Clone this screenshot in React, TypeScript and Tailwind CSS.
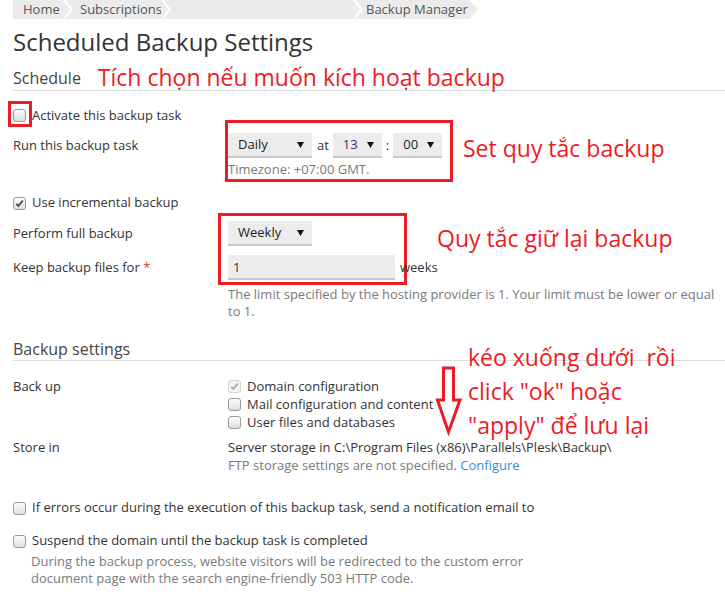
import React from 'react';

const RED = 'text-[#ed1c24]';

function Chevron() {
  return (
    <svg width="10" height="19" viewBox="0 0 10 19" className="shrink-0">
      <polyline points="1,0 9,9.5 1,19" fill="none" stroke="#ffffff" strokeWidth="2" />
    </svg>
  );
}

function Breadcrumb() {
  return (
    <div className="ml-[13px] flex h-[19px] items-center text-[13px] leading-[19px] text-[#555]">
      <div className="flex h-full w-[50px] items-center bg-[#ebebeb] pl-[10px]">Home</div>
      <div className="h-full bg-[#ebebeb]">
        <Chevron />
      </div>
      <div className="flex h-full w-[88px] items-center bg-[#ebebeb] pl-[7px]">Subscriptions</div>
      <div className="h-full bg-[#ebebeb]">
        <Chevron />
      </div>
      <div className="h-full w-[182px] bg-[#ebebeb]" />
      <div className="h-full bg-[#ebebeb]">
        <Chevron />
      </div>
      <div className="flex h-full w-[106px] items-center bg-[#ebebeb] pl-[3px]">Backup Manager</div>
      <svg width="9" height="19" viewBox="0 0 9 19" className="shrink-0">
        <polygon points="0,0 9,9.5 0,19" fill="#ebebeb" />
      </svg>
    </div>
  );
}

function Checkbox({ checked = false, disabled = false }: { checked?: boolean; disabled?: boolean }) {
  return (
    <span
      className={`relative inline-flex h-[13px] w-[13px] shrink-0 items-center justify-center rounded-[3px] border ${
        disabled ? 'border-[#d4d4d4] bg-[#f4f4f4]' : 'border-[#9a9a9a] bg-gradient-to-b from-[#fdfdfd] to-[#dedede]'
      }`}
    >
      {checked && (
        <svg width="9" height="9" viewBox="0 0 9 9">
          <polyline
            points="1.2,4.8 3.5,7 7.8,1.5"
            fill="none"
            stroke={disabled ? '#a8a8a8' : '#444'}
            strokeWidth="1.8"
          />
        </svg>
      )}
    </span>
  );
}

function Select({ value, width, valueClass = 'text-[#222]' }: { value: string; width: string; valueClass?: string }) {
  return (
    <div
      className={`flex h-[25px] ${width} items-center justify-between border-b-2 border-[#c9c9c9] bg-[#ececec] pl-[10px] pr-[8px]`}
    >
      <span className={valueClass}>{value}</span>
      <svg width="7" height="6" viewBox="0 0 7 6">
        <polygon points="0,0 7,0 3.5,6" fill="#111" />
      </svg>
    </div>
  );
}

function Row({ label, children, className = '' }: { label: React.ReactNode; children: React.ReactNode; className?: string }) {
  return (
    <div className={`flex ${className}`}>
      <div className="w-[215px] shrink-0">{label}</div>
      <div className="relative flex-1">{children}</div>
    </div>
  );
}

export default function App() {
  return (
    <div className="relative h-[594px] w-[725px] overflow-hidden bg-white font-['Open_Sans','Liberation_Sans',sans-serif] text-[13px] text-[#333]">
      <Breadcrumb />

      <div className="pl-[13px]">
        <h1 className="mt-[8px] text-[24px] leading-[30px] text-[#333]">Scheduled Backup Settings</h1>

        <div className="mt-[5px] flex h-[29px] items-end border-b border-[#dcdcdc] pb-[1px]">
          <h2 className="text-[16px] leading-[22px] text-[#444]">Schedule</h2>
          <span className={`ml-[17px] translate-y-[3px] text-[23px] leading-[30px] ${RED}`}>
            Tích chọn nếu muốn kích hoạt backup
          </span>
        </div>

        {/* Activate */}
        <div className="relative mt-[14px] flex h-[20px] items-center leading-[20px]">
          <span className="relative flex">
            <Checkbox />
            <span className="absolute -left-[5px] -top-[8px] h-[26px] w-[24px] border-[3px] border-[#ed1c24]" />
          </span>
          <span className="ml-[6px]">Activate this backup task</span>
        </div>

        {/* Run */}
        <Row className="mt-[8px]" label={<div className="leading-[25px]">Run this backup task</div>}>
          <div className="flex h-[25px] items-center">
            <Select value="Daily" width="w-[84px]" />
            <span className="ml-[5px] mr-[4px]">at</span>
            <Select value="13" width="w-[49px]" valueClass="text-[#4a2a6e]" />
            <span className="ml-[4px] mr-[4px]">:</span>
            <Select value="00" width="w-[49px]" />
          </div>
          <div className="leading-[23px] text-[#7a7a7a]">Timezone: +07:00 GMT.</div>
          <span className="absolute -left-[3px] -top-[13px] h-[62px] w-[228px] border-[3px] border-[#ed1c24]" />
          <span className={`absolute left-[235px] top-[0px] whitespace-nowrap text-[23px] leading-[30px] ${RED}`}>
            Set quy tắc backup
          </span>
        </Row>

        {/* Incremental */}
        <div className="mt-[12px] flex h-[20px] items-center">
          <Checkbox checked />
          <span className="ml-[6px]">Use incremental backup</span>
        </div>

        {/* Perform full backup */}
        <Row className="mt-[8px]" label={<div className="leading-[25px]">Perform full backup</div>}>
          <Select value="Weekly" width="w-[84px]" />
          <span className="absolute -left-[10px] -top-[8px] h-[72px] w-[189px] border-[3px] border-[#ed1c24]" />
          <span className={`absolute left-[209px] top-[2px] whitespace-nowrap text-[23px] leading-[30px] ${RED}`}>
            Quy tắc giữ lại backup
          </span>
        </Row>

        {/* Keep */}
        <Row
          className="mt-[9px]"
          label={
            <div className="leading-[25px]">
              Keep backup files for <span className="text-[#d9302b]">*</span>
            </div>
          }
        >
          <div className="flex items-center">
            <div className="h-[25px] w-[167px] border-b-2 border-[#c9c9c9] bg-[#ececec] pl-[5px] leading-[24px]">1</div>
            <span className="ml-[5px]">weeks</span>
          </div>
          <div className="mt-[6px] whitespace-nowrap leading-[17px] text-[#7a7a7a]">
            The limit specified by the hosting provider is 1. Your limit must be lower or equal
            <br />
            to 1.
          </div>
        </Row>

        {/* Backup settings */}
        <h2 className="mt-[18px] border-b border-[#dcdcdc] text-[16px] leading-[22px] text-[#444]">
          Backup settings
        </h2>

        <Row className="mt-[16px] leading-[18px]" label="Back up">
          <div className="flex h-[18px] items-center">
            <Checkbox checked disabled />
            <span className="ml-[6px]">Domain configuration</span>
          </div>
          <div className="flex h-[18px] items-center">
            <Checkbox />
            <span className="ml-[6px]">Mail configuration and content</span>
          </div>
          <div className="flex h-[18px] items-center">
            <Checkbox />
            <span className="ml-[6px]">User files and databases</span>
          </div>
        </Row>

        <Row className="mt-[7px] leading-[18px]" label="Store in">
          <div className="whitespace-nowrap">Server storage in C:\Program Files (x86)\Parallels\Plesk\Backup\</div>
          <div className="whitespace-nowrap text-[#7a7a7a]">
            FTP storage settings are not specified. <span className="text-[#3b8bd0]">Configure</span>
          </div>
        </Row>

        <div className="mt-[25px] flex h-[18px] items-center">
          <Checkbox />
          <span className="ml-[6px]">If errors occur during the execution of this backup task, send a notification email to</span>
        </div>

        <div className="mt-[15px] flex h-[18px] items-center">
          <Checkbox />
          <span className="ml-[6px]">Suspend the domain until the backup task is completed</span>
        </div>
        <div className="ml-[18px] mt-[3px] whitespace-nowrap leading-[17px] text-[#7a7a7a]">
          During the backup process, website visitors will be redirected to the custom error
          <br />
          document page with the search engine-friendly 503 HTTP code.
        </div>
      </div>

      {/* annotation over the Backup settings section */}
      <div className={`absolute left-[468px] top-[340px] whitespace-nowrap text-[23px] leading-[34px] ${RED}`}>
        <div>kéo xuống dưới&nbsp; rồi</div>
        <div>click "ok" hoặc</div>
        <div>"apply" để lưu lại</div>
      </div>
      <svg className="absolute left-[435px] top-[366px]" width="28" height="70" viewBox="0 0 28 70">
        <polygon
          points="8.5,2 18.5,2 18.5,34 25,34 13.5,66 2.5,34 8.5,34"
          fill="none"
          stroke="#ed1c24"
          strokeWidth="3"
          strokeLinejoin="miter"
        />
      </svg>
    </div>
  );
}
